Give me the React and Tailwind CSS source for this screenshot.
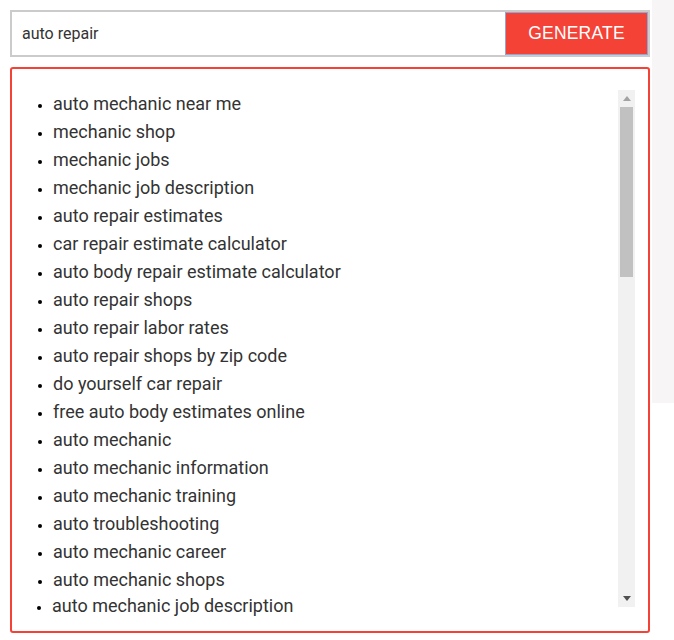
import React from 'react';

const keywords = [
  'auto mechanic near me',
  'mechanic shop',
  'mechanic jobs',
  'mechanic job description',
  'auto repair estimates',
  'car repair estimate calculator',
  'auto body repair estimate calculator',
  'auto repair shops',
  'auto repair labor rates',
  'auto repair shops by zip code',
  'do yourself car repair',
  'free auto body estimates online',
  'auto mechanic',
  'auto mechanic information',
  'auto mechanic training',
  'auto troubleshooting',
  'auto mechanic career',
  'auto mechanic shops',
];

function Scrollbar() {
  return (
    <div className="w-[17px] h-[517px] shrink-0 bg-[#f1f1f1] flex flex-col">
      <div className="h-[17px] flex items-center justify-center">
        <svg width="8" height="5" viewBox="0 0 8 5">
          <path d="M4 0 L8 5 L0 5 Z" fill="#a3a3a3" />
        </svg>
      </div>
      <div className="mx-[2px] h-[170px] bg-[#c1c1c1]" />
      <div className="flex-1" />
      <div className="h-[17px] flex items-center justify-center">
        <svg width="8" height="5" viewBox="0 0 8 5">
          <path d="M0 0 L8 0 L4 5 Z" fill="#505050" />
        </svg>
      </div>
    </div>
  );
}

function Item({ children, className = '' }) {
  return (
    <li className={`flex items-center ${className}`}>
      <span className="w-[4px] h-[4px] rounded-full bg-black mr-[11px] translate-y-[2px] shrink-0" />
      <span>{children}</span>
    </li>
  );
}

export default function App() {
  return (
    <div className="w-[674px] h-[640px] flex bg-white" style={{ fontFamily: 'Roboto, "Liberation Sans", sans-serif' }}>
      <div className="w-[652px] pt-[10px] pl-[10px] pr-[2px] flex flex-col gap-[10px]">
        <div className="h-[47px] flex border-2 border-[#cbcbcb] bg-white">
          <input
            defaultValue="auto repair"
            className="flex-1 min-w-0 pl-[10px] text-[16px] text-[#333] outline-none bg-white"
            style={{ fontFamily: 'Roboto, sans-serif' }}
          />
          <button
            className="w-[143px] bg-[#f44336] border border-[#8fa6d8] text-white text-[17.5px] tracking-[0.2px]"
            style={{ fontFamily: '"Liberation Sans", Arial, sans-serif' }}
          >
            GENERATE
          </button>
        </div>

        <div className="h-[566px] border-2 border-[#f44336] rounded-[3px] pt-[21px] pr-[13px] flex">
          <ul className="flex-1 pl-[26px] text-[18px] leading-[28px] text-[#333]">
            {keywords.map((k) => (
              <Item key={k}>{k}</Item>
            ))}
            <Item className="-mt-[2px] -ml-px">auto mechanic job description</Item>
          </ul>
          <Scrollbar />
        </div>
      </div>
      <div className="flex-1">
        <div className="h-[403px] bg-[#f7f5f5]" />
      </div>
    </div>
  );
}
